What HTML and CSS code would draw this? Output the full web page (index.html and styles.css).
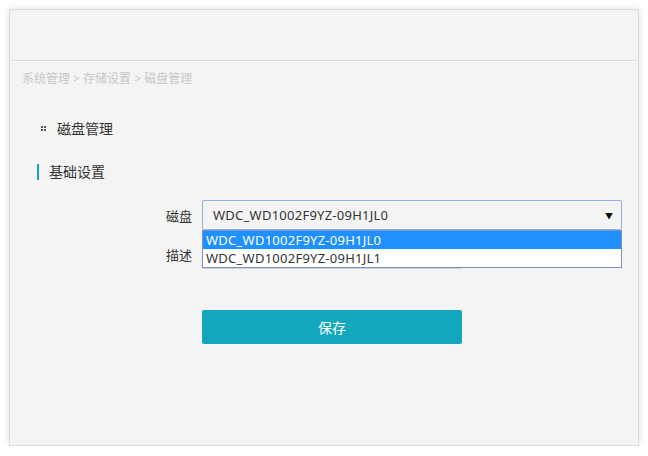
FILE: index.html
```html
<!DOCTYPE html>
<html lang="zh">
<head>
<meta charset="utf-8">
<link rel="stylesheet" href="styles.css">
</head>
<body>
<div class="panel">
  <div class="header"></div>
  <div class="content">
    <div class="crumb">系统管理 &gt; 存储设置 &gt; 磁盘管理</div>
    <div class="title"><span class="dots"><i></i><i></i><i></i><i></i></span>磁盘管理</div>
    <div class="sub">基础设置</div>
    <div class="form">
      <div class="row">
        <label class="lbl">磁盘</label>
        <div class="selwrap">
          <div class="select"><span>WDC_WD1002F9YZ-09H1JL0</span><span class="arrow">▼</span></div>
          <div class="menu">
            <div class="opt active">WDC_WD1002F9YZ-09H1JL0</div>
            <div class="opt">WDC_WD1002F9YZ-09H1JL1</div>
          </div>
        </div>
      </div>
      <div class="row row2">
        <label class="lbl">描述</label>
        <div class="input"></div>
      </div>
      <div class="row row3">
        <span class="lbl"></span>
        <button class="btn">保存</button>
      </div>
    </div>
  </div>
</div>
</body>
</html>
```
FILE: styles.css
```css
* { box-sizing: border-box; }
html, body { margin: 0; padding: 0; background: #fff; }
body {
  font-family: "Noto Sans", "Noto Sans CJK SC", sans-serif;
  font-size: 13px;
  color: #333;
  padding: 9px 10px 0 9px;
}
.panel {
  width: 630px;
  height: 437px;
  background: #f4f4f4;
  border: 1px solid #dcdcdc;
  box-shadow: 0 0 8px rgba(0,0,0,0.12);
}
.header {
  height: 51px;
  border-bottom: 1px solid #dadada;
}
.content {
  border-top: 1px solid #fff;
}
.crumb {
  padding: 8px 0 0 12px;
  height: 32px;
  line-height: 18px;
  font-size: 12px;
  color: #c8c8c8;
}
.title {
  display: flex;
  align-items: center;
  margin-top: 24px;
  padding-left: 31px;
  height: 20px;
  font-size: 14px;
  color: #333;
}
.dots {
  display: grid;
  grid-template-columns: 2px 2px;
  gap: 1px;
  margin-right: 11px;
}
.dots i { display: block; width: 2px; height: 2px; background: #555; }
.sub {
  margin-top: 26px;
  margin-left: 27px;
  padding-left: 10px;
  height: 16px;
  line-height: 16px;
  border-left: 2px solid #12a7bd;
  font-size: 14px;
  color: #333;
}
.form { margin-top: 20px; }
.row { display: flex; align-items: center; }
.lbl {
  width: 192px;
  padding-right: 10px;
  text-align: right;
  font-size: 13px;
  color: #333;
}
.selwrap { position: relative; }
.select {
  width: 420px;
  height: 30px;
  border: 1px solid #8fb0e8;
  border-radius: 2px;
  background: #f4f4f4;
  display: flex;
  align-items: center;
  justify-content: space-between;
  padding: 0 8px 0 10px;
  font-size: 13px;
  letter-spacing: 0.25px;
  color: #333;
}
.arrow { font-size: 8px; color: #111; letter-spacing: 0; }
.menu {
  position: absolute;
  left: 0;
  top: 30px;
  width: 420px;
  background: #fff;
  border: 1px solid #7f8fc8;
  z-index: 2;
}
.opt {
  height: 18px;
  line-height: 18px;
  padding-left: 3px;
  font-size: 13px;
  letter-spacing: 0.25px;
  color: #333;
}
.opt.active { background: #1e90ff; color: #fff; }
.row2 { margin-top: 9px; }
.input {
  width: 260px;
  height: 30px;
  border: 1px solid #d0d0d0;
  border-radius: 2px;
  background: #f4f4f4;
}
.row3 { margin-top: 41px; }
.btn {
  width: 260px;
  height: 34px;
  border: none;
  border-radius: 2px;
  background: #12a7bd;
  color: #fff;
  font-family: "Noto Sans CJK SC", sans-serif;
  font-size: 14px;
  padding: 0;
}
```
